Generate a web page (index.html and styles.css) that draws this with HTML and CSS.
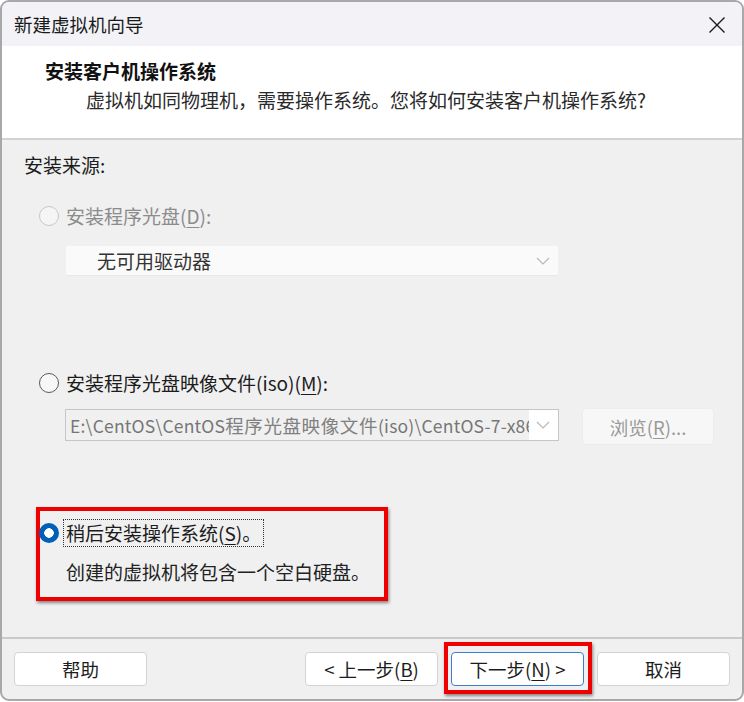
FILE: index.html
```html
<!DOCTYPE html>
<html lang="zh-CN">
<head>
<meta charset="utf-8">
<title>新建虚拟机向导</title>
<link rel="stylesheet" href="styles.css">
</head>
<body>
<div class="win">
  <div class="titlebar">
    <span class="title">新建虚拟机向导</span>
    <svg class="close" width="18" height="18" viewBox="0 0 18 18"><path d="M1.5 1.5 L16.5 16.5 M16.5 1.5 L1.5 16.5" stroke="#1a1a1a" stroke-width="1.4" fill="none"/></svg>
  </div>
  <div class="header">
    <div class="heading">安装客户机操作系统</div>
    <div class="subtitle">虚拟机如同物理机，需要操作系统。您将如何安装客户机操作系统?</div>
  </div>
  <div class="content">
    <div class="src-label">安装来源:</div>

    <div class="radio-row disabled row1">
      <span class="radio"></span>
      <span class="rlabel">安装程序光盘(<u>D</u>):</span>
    </div>
    <div class="dropdown">
      <span class="dd-text">无可用驱动器</span>
      <svg class="chev" width="14" height="8" viewBox="0 0 14 8"><path d="M1 1 L7 7 L13 1" stroke="#b8b8b8" stroke-width="1.2" fill="none"/></svg>
    </div>

    <div class="radio-row row2">
      <span class="radio"></span>
      <span class="rlabel">安装程序光盘映像文件(iso)(<u>M</u>):</span>
    </div>
    <div class="iso-row">
      <div class="iso-input">
        <div class="iso-text"><span class="lat">E:\CentOS\CentOS</span>程序光盘映像文件<span class="lat">(iso)\CentOS-7-x86</span></div>
        <svg class="chev" width="14" height="8" viewBox="0 0 14 8"><path d="M1 1 L7 7 L13 1" stroke="#b8b8b8" stroke-width="1.2" fill="none"/></svg>
      </div>
      <div class="browse">浏览(<u>R</u>)...</div>
    </div>

    <div class="mark-box">
      <div class="radio-row row3">
        <span class="radio checked"></span>
        <span class="rlabel focus">稍后安装操作系统(<u>S</u>)。</span>
      </div>
      <div class="desc">创建的虚拟机将包含一个空白硬盘。</div>
    </div>
  </div>
  <div class="footer">
    <div class="btn">帮助</div>
    <div class="btn-group">
      <div class="btn">&lt; 上一步(<u>B</u>)</div>
      <span class="hl"><span class="btn primary">下一步(<u>N</u>) &gt;</span></span>
      <div class="btn">取消</div>
    </div>
  </div>
</div>
</body>
</html>
```

FILE: styles.css
```css
* { box-sizing: border-box; }
html, body { margin: 0; padding: 0; background: #ffffff; }
body {
  font-family: "Noto Sans CJK SC", "Noto Sans", sans-serif;
  font-size: 19px;
  color: #1c1c1c;
}
.win {
  width: 744px;
  height: 701px;
  border: 2px solid #a8a8a8;
  border-radius: 9px;
  overflow: hidden;
  display: flex;
  flex-direction: column;
  background: #f0f0f0;
}
.titlebar {
  height: 44px;
  flex: none;
  background: #f3f3f7;
  display: flex;
  align-items: center;
  justify-content: space-between;
  padding: 0 16px 0 12px;
}
.title { font-size: 18.5px; line-height: 26px; color: #1a1a1a; }
.close { display: block; margin-top: 2px; }
.header {
  height: 94px;
  flex: none;
  background: #ffffff;
  border-bottom: 2px solid #d2d2d2;
  padding: 12px 0 0 0;
}
.heading {
  padding-left: 43px;
  font-weight: 700;
  line-height: 26px;
  font-size: 19px;
  color: #111;
}
.subtitle {
  margin-top: 3px;
  padding-left: 84px;
  line-height: 26px;
  color: #2a2a2a;
}
.content {
  height: 497px;
  flex: none;
  padding: 12px 0 0 22px;
}
.src-label { line-height: 26px; }
.radio-row {
  display: flex;
  align-items: center;
  height: 26px;
  margin-left: 15px;
}
.row1 { margin-top: 25px; }
.row2 { margin-top: 94px; }
.radio {
  width: 20px;
  height: 20px;
  border-radius: 50%;
  border: 1px solid #5a5a5a;
  background: #f7f7f7;
  flex: none;
  margin-right: 7px;
}
.disabled .radio { border-color: #c8c8c8; background: #f5f5f5; }
.disabled .rlabel { color: #8c8c8c; }
.radio.checked {
  border: none;
  background: radial-gradient(circle, #ffffff 0 4.5px, #005fb8 5px);
}
.rlabel { line-height: 26px; white-space: nowrap; }
.rlabel u { text-underline-offset: 3px; }
.dropdown {
  margin: 17px 0 0 42px;
  width: 492px;
  height: 30px;
  background: #fafafa;
  border-bottom: 1px solid #e8e8e8;
  display: flex;
  align-items: center;
  justify-content: space-between;
  padding: 0 8px 0 31px;
}
.dd-text { color: #333; line-height: 26px; }
.iso-row {
  display: flex;
  align-items: flex-start;
  margin: 12px 0 0 41px;
  gap: 23px;
}
.iso-input {
  width: 494px;
  height: 32px;
  margin-top: 1px;
  border: 1px solid #c6c6c6;
  background: #ffffff;
  display: flex;
  align-items: center;
  padding-right: 8px;
}
.iso-text {
  width: 463px;
  height: 30px;
  background: #f0f0f0;
  padding-left: 4px;
  overflow: hidden;
  white-space: nowrap;
  line-height: 30px;
  color: #808080;
  font-size: 18.5px;
  letter-spacing: 0.6px;
}
.iso-text .lat { font-size: 17.5px; letter-spacing: 0.2px; color: #767676; }
.iso-input .chev { margin-left: auto; }
.browse {
  width: 132px;
  height: 37px;
  background: #f7f7f7;
  border: 1px solid #ececec;
  border-radius: 4px;
  display: flex;
  align-items: center;
  justify-content: center;
  color: #9a9a9a;
  font-size: 18.5px;
}
.browse u { text-underline-offset: 3px; }
.mark-box {
  margin: 62px 0 0 12px;
  width: 352px;
  height: 94px;
  border: 4px solid #ee0000;
  box-shadow: 1px 2px 3px rgba(0,0,0,0.45);
  padding: 9px 0 0 0;
}
.row3 { margin-left: -1px; }
.rlabel.focus {
  outline: 1px dotted #333;
  padding: 0 2px;
  margin-left: -2px;
}
.desc {
  margin: 13px 0 0 26px;
  line-height: 26px;
  color: #222;
}
.footer {
  flex: 1;
  border-top: 2px solid #c9c9c9;
  display: flex;
  justify-content: space-between;
  align-items: flex-start;
  padding: 13px 12px 0 12px;
}
.btn-group { display: flex; gap: 12px; }
.btn {
  width: 133px;
  height: 34px;
  background: #ffffff;
  border: 1px solid #d3d3d3;
  border-radius: 4px;
  display: flex;
  align-items: center;
  justify-content: center;
  font-size: 18.5px;
  color: #1c1c1c;
}
.btn u { text-underline-offset: 3px; }
.btn.primary { border-color: #3d7fcf; }
.btn-group .btn:last-child { margin-left: 1px; }
.hl { position: relative; display: flex; }
.hl::after {
  content: "";
  position: absolute;
  left: -6px;
  top: -10px;
  right: -8px;
  bottom: -8px;
  border: 4px solid #ee0000;
  box-shadow: 1px 2px 3px rgba(0,0,0,0.45);
  pointer-events: none;
}
```
